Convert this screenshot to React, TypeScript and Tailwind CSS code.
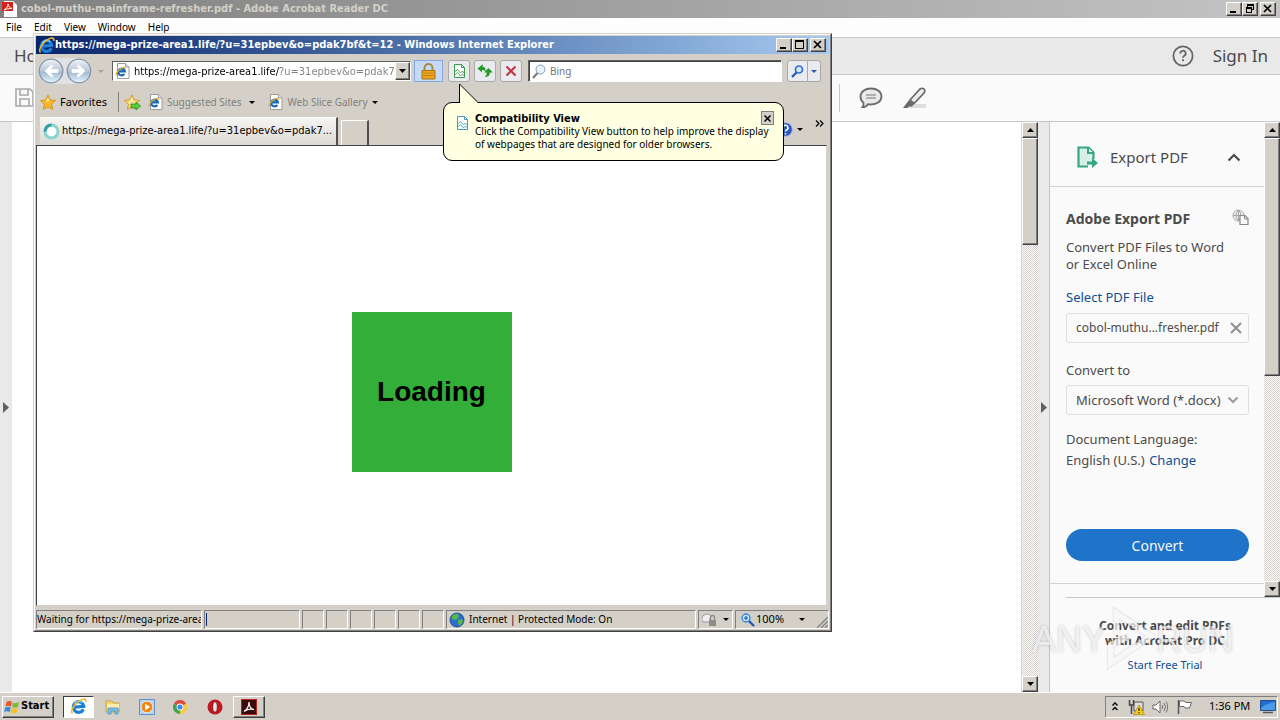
import type { ReactNode } from "react";

const tahoma = "font-['Noto_Sans','DejaVu_Sans_Condensed',sans-serif]";
const tahomaWide = "font-['DejaVu_Sans_Condensed','Noto_Sans',sans-serif]";
const tahomaBold = "font-['DejaVu_Sans_Condensed','Noto_Sans',sans-serif] font-bold";
const raised =
  "border border-t-white border-l-white border-r-[#404040] border-b-[#404040] shadow-[inset_-1px_-1px_0_#808080] bg-[#d4d0c8]";

function Arrow({ dir }: { dir: "up" | "down" | "right" }) {
  const d = { up: "M0 4h7L3.500 0z", down: "M0 0h7L3.500 4z", right: "M0 0v11L6 5.500z" }[dir];
  return (
    <svg width={dir === "right" ? 6 : 7} height={dir === "right" ? 11 : 4} aria-hidden="true" className="shrink-0">
      <path d={d} fill={dir === "right" ? "#606060" : "#000"} />
    </svg>
  );
}

function SmallArrow({ color = "#000" }: { color?: string }) {
  return (
    <svg width="6" height="3" aria-hidden="true" className="shrink-0">
      <path d="M0 0h6L3 3z" fill={color} />
    </svg>
  );
}

function Scrollbar({ thumb }: { thumb: string }) {
  return (
    <div className="flex w-4 shrink-0 flex-col bg-[repeating-conic-gradient(#ffffff_0_25%,#d4d0c8_0_50%)] bg-[length:2px_2px]">
      <button aria-label="Scroll up" className={`flex h-4 items-center justify-center ${raised}`}>
        <Arrow dir="up" />
      </button>
      <div className={`${thumb} ${raised}`} />
      <div className="flex-1" />
      <button aria-label="Scroll down" className={`flex h-4 items-center justify-center ${raised}`}>
        <Arrow dir="down" />
      </button>
    </div>
  );
}

function WindowButtons({ middle }: { middle: "max" | "restore" }) {
  const cls = `flex h-[14px] w-4 items-center justify-center ${raised}`;
  return (
    <div className="flex shrink-0">
      <button aria-label="Minimize" className={cls}>
        <svg width="10" height="10"><path d="M1 7h6v2H1z" /></svg>
      </button>
      <button aria-label={middle === "max" ? "Maximize" : "Restore"} className={cls}>
        {middle === "max" ? (
          <svg width="10" height="10"><path d="M0 0h9v9H0zM1 2v6h7V2z" fillRule="evenodd" /></svg>
        ) : (
          <svg width="10" height="10"><path d="M2 0h7v6H7v3H1V3h1zM3 2v1h4v2h1V2zM2 5v3h4V5z" fillRule="evenodd" /></svg>
        )}
      </button>
      <button aria-label="Close" className={`ml-[2px] ${cls}`}>
        <svg width="10" height="10"><path d="M1 1l7 7M8 1L1 8" stroke="#000" strokeWidth="1.700" /></svg>
      </button>
    </div>
  );
}

function IeLogo({ size = 17 }: { size?: number }) {
  return (
    <svg width={size} height={size} viewBox="0 0 16 16" aria-hidden="true" className="shrink-0">
      <path d="M12.600 10.600A5 5 0 1 1 13 7.800L4.500 8.600" fill="none" stroke="#1b7fdc" strokeWidth="3" />
      <path d="M11.500 4.500A4.700 4.700 0 0 0 4 6" fill="none" stroke="#6fd2fa" strokeWidth="1.300" />
      <path d="M2.500 14.500C-.5 13 4 5.500 9 2.500c4-2.300 6.500-2 5.800 1.200" fill="none" stroke="#f2b91e" strokeWidth="1.500" />
    </svg>
  );
}

function IePage() {
  return (
    <svg width="15" height="16" viewBox="0 0 15 16" aria-hidden="true" className="shrink-0">
      <path d="M2.500.5h8l3.500 3.500v11.500H2.500z" fill="#fff" stroke="#9a9a9a" />
      <path d="M10.500.5V4H14" fill="#e8e8e8" stroke="#9a9a9a" />
      <path d="M9.300 11a3.400 3.400 0 1 1 .6-2.600H3" fill="none" stroke="#1a66bd" strokeWidth="2.200" />
      <path d="M1.500 12.500C-.3 11 4 6 7.500 4.700c2-.7 3 0 2.600 1" fill="none" stroke="#eab41a" strokeWidth="1.200" />
    </svg>
  );
}

function Star({ add = false }: { add?: boolean }) {
  return (
    <svg width="17" height="17" viewBox="0 0 17 17" aria-hidden="true" className="shrink-0">
      <path d="M8 1l2.200 4.900 5.300.6-4 3.600 1.100 5.300L8 12.700l-4.600 2.700 1.100-5.300-4-3.600 5.300-.6z" fill={add ? "#fbe08a" : "#fbb829"} stroke="#d88c10" strokeWidth=".9" />
      <path d="M8 3.500l1.300 3.300-3.800 1z" fill="#fff3b0" />
      {add && <path d="M7 10h5V8l4.500 4-4.500 4v-2H7z" fill="#5ecb3c" stroke="#2c8a1d" strokeWidth=".8" />}
    </svg>
  );
}

function TornPage({ color }: { color: string }) {
  return (
    <svg width="13" height="16" viewBox="0 0 13 16" aria-hidden="true" className="shrink-0">
      <path d="M1.500 1.500h7l3 3v10h-10z" fill="#fff" stroke={color} />
      <path d="M8.500 1.500v3h3" fill="none" stroke={color} />
      <path d="M1.500 9l3-2.500 3 3.500L9.500 8l2 2.500M1.500 12l3-2.500 3 3.500 2-2 2 2" fill="none" stroke={color} strokeWidth=".9" />
    </svg>
  );
}

function NavCircle({ flip, label }: { flip?: boolean; label: string }) {
  return (
    <button aria-label={label}>
      <svg width="26" height="26" viewBox="0 0 26 26" className="block">
        <defs>
          <linearGradient id={flip ? "fwd" : "bck"} x1="0" y1="0" x2="0" y2="1">
            <stop offset="0" stopColor="#f0f4f8" />
            <stop offset=".5" stopColor="#b9c6d6" />
            <stop offset=".55" stopColor="#a3bad1" />
            <stop offset="1" stopColor="#e4f8ff" />
          </linearGradient>
        </defs>
        <circle cx="13" cy="13" r="11.800" fill={`url(#${flip ? "fwd" : "bck"})`} stroke="#8492a3" strokeWidth="1.300" />
        <path d={flip ? "M6 11.500h8L11 8.300 12.500 7l6.500 6-6.500 6-1.500-1.300 3-3.200H6z" : "M20 11.500h-8l3-3.200L13.500 7 7 13l6.500 6 1.500-1.300-3-3.200h8z"} fill="#fff" stroke="#fff" strokeWidth=".8" />
      </svg>
    </button>
  );
}

function ToolButton({ label, children, className = "w-[22px]" }: { label: string; children: ReactNode; className?: string }) {
  return (
    <button aria-label={label} className={`flex h-[22px] shrink-0 items-center justify-center rounded-[3px] border border-[#a9a9ac] bg-[#e9ebee] ${className}`}>
      {children}
    </button>
  );
}

function Pane({ className, children }: { className: string; children?: ReactNode }) {
  return (
    <div className={`flex h-[19px] items-center overflow-hidden border border-t-[#808080] border-l-[#808080] border-r-white border-b-white whitespace-nowrap ${className}`}>
      {children}
    </div>
  );
}

function Balloon() {
  return (
    <div role="tooltip" className="absolute top-[68px] left-[409px] w-[341px]">
      <div className="flex h-[59px] rounded-[9px] border border-black bg-[#ffffe1] pt-[9px] pr-[9px] pl-3">
        <div className="pt-[3px]"><TornPage color="#3f9dbb" /></div>
        <div className="ml-[6px] flex-1 text-[10px] leading-[13px] whitespace-nowrap text-black">
          <div className={`text-[11px] ${tahomaBold}`}>Compatibility View</div>
          <div>Click the Compatibility View button to help improve the display</div>
          <div>of webpages that are designed for older browsers.</div>
        </div>
      </div>
      <button aria-label="Close tip" className="absolute top-[9px] right-[10px] flex h-[14px] w-[13px] items-center justify-center border border-[#808080] bg-[#d4d0c8]">
        <svg width="7" height="7"><path d="M.5.500l6 6M6.500.500l-6 6" stroke="#000" strokeWidth="1.500" /></svg>
      </button>
      <svg width="22" height="20" className="absolute -top-[19px] left-4" aria-hidden="true">
        <path d="M.5 20V1L19.500 20" fill="#ffffe1" stroke="#000" />
      </svg>
    </div>
  );
}

function BrowserWindow() {
  return (
    <section aria-label="Internet Explorer" className={`absolute top-[33px] left-[33px] flex w-[799px] flex-col border border-t-[#d4d0c8] border-l-[#d4d0c8] border-r-[#404040] border-b-[#404040] bg-[#d4d0c8] text-[10px] text-black ${tahoma}`}>
      <div className="flex flex-col border border-t-white border-l-white border-r-[#808080] border-b-[#808080] p-px">
        <header className="flex h-[18px] items-center bg-linear-to-r from-[#0a246a] to-[#a6caf0] pr-[3px] pl-[2px]">
          <IeLogo />
          <h1 className={`flex-1 text-[11px] whitespace-nowrap text-white ${tahomaBold}`}>
            https://mega-prize-area1.life/?u=31epbev&amp;o=pdak7bf&amp;t=12 - Windows Internet Explorer
          </h1>
          <WindowButtons middle="max" />
        </header>

        <div className="flex h-[34px] items-center pl-[2px]">
          <div className="flex gap-[2px] rounded-full bg-[#dfe1e5]">
            <NavCircle label="Back" />
            <NavCircle label="Forward" flip />
          </div>
          <button aria-label="Recent pages" className="ml-[5px] flex w-2 justify-center"><SmallArrow color="#a8a49c" /></button>
          <div className="ml-[7px] flex h-5 w-[299px] items-center border border-t-[#606060] border-l-[#606060] border-r-white border-b-white bg-white pl-[2px]">
            <IePage />
            <input
              aria-label="Address"
              defaultValue="https://mega-prize-area1.life/?u=31epbev&o=pdak7bf&t=12"
              className={`ml-1 h-[17px] w-0 flex-1 bg-linear-to-r from-black from-[147px] to-[#808080] to-[147px] bg-clip-text text-[11px] text-transparent outline-none ${tahomaWide}`}
            />
            <button aria-label="Show address list" className={`flex h-[18px] w-[15px] items-center justify-center ${raised}`}><Arrow dir="down" /></button>
          </div>
          <button aria-label="Security report" className="ml-[3px] flex h-[22px] w-[29px] items-center justify-center border border-[#86a8e0] bg-[#c6d9fb]">
            <svg width="15" height="17" viewBox="0 0 15 17">
              <path d="M3.500 8V5a4 4 0 0 1 8 0v3" fill="none" stroke="#a98a3a" strokeWidth="2" />
              <path d="M1 7.500h13V16H1z" fill="#eba71c" stroke="#a87410" />
              <path d="M2 10h11M2 12.500h11" stroke="#c98410" />
            </svg>
          </button>
          <div className="ml-[5px] flex gap-1">
            <ToolButton label="Compatibility View"><TornPage color="#3c9a4c" /></ToolButton>
            <ToolButton label="Refresh">
              <svg width="16" height="14" viewBox="0 0 16 14" fill="#269a26">
                <path d="M6 0L.5 4.500 5 8.500V6q2.500-.5 3.500 1.500Q9 3 5.500 2.800z" />
                <path d="M11.500 4L7 8.500h2.800q0 3-2 4.500 5 0 5.200-4.500h3z" />
              </svg>
            </ToolButton>
            <ToolButton label="Stop">
              <svg width="12" height="12"><path d="M1.500 1.500l9 9M10.500 1.500l-9 9" stroke="#c8303e" strokeWidth="2" /></svg>
            </ToolButton>
          </div>
          <div className="ml-[6px] flex h-[22px] w-[254px] items-center border border-t-[#606060] border-l-[#606060] border-r-white border-b-white bg-white pl-[3px] shadow-[inset_1px_1px_0_#404040]">
            <svg width="14" height="15" viewBox="0 0 14 15" aria-hidden="true">
              <circle cx="8.500" cy="5.500" r="4.500" fill="#e6f3fb" stroke="#8a9cab" />
              <path d="M5.500 9l-4.500 5" stroke="#777" strokeWidth="2" />
            </svg>
            <input aria-label="Search" placeholder="Bing" className="ml-1 w-0 flex-1 text-[10px] outline-none placeholder:text-[#757575]" />
          </div>
          <div className="ml-[5px] flex">
            <ToolButton label="Search" className="w-[21px] rounded-r-none">
              <svg width="13" height="13"><circle cx="8" cy="4.500" r="3.500" fill="#d5e9fb" stroke="#2a6fd8" strokeWidth="1.700" /><path d="M5.500 7.500L1 12" stroke="#1d52b8" strokeWidth="2.200" /></svg>
            </ToolButton>
            <ToolButton label="Search options" className="w-[13px] rounded-l-none border-l-0"><SmallArrow color="#2a5ca8" /></ToolButton>
          </div>
        </div>

        <nav aria-label="Favorites" className="flex h-7 items-center pl-1 text-[#808080]">
          <button className="flex items-center gap-[3px] text-[11px] text-black"><Star />Favorites</button>
          <div className="ml-[11px] h-5 border-l border-[#808080]" />
          <button aria-label="Add to Favorites Bar" className="ml-[5px]"><Star add /></button>
          <a href="#suggested" className="ml-[7px] flex items-center gap-[4px]"><IePage />Suggested Sites<span className="ml-1"><SmallArrow /></span></a>
          <a href="#slices" className="ml-[13px] flex items-center gap-[4px]"><IePage />Web Slice Gallery<SmallArrow /></a>
        </nav>

        <div className="flex h-[29px] items-end pl-1">
          <button className="flex h-7 w-[298px] items-center gap-[2px] border-t border-r-2 border-t-white border-r-[#505050] bg-linear-to-b from-[#f6f5f3] to-[#dcd9d3] pl-[3px]">
            <svg width="17" height="17" aria-hidden="true">
              <circle cx="8.500" cy="8.500" r="6.500" fill="#fff" stroke="#8bd3cf" strokeWidth="3" />
              <path d="M2 8.500a6.500 6.500 0 0 1 6.500-6.500" fill="none" stroke="#2f9fa0" strokeWidth="3" />
            </svg>
            <span className={`text-[11px] ${tahomaWide}`}>https://mega-prize-area1.life/?u=31epbev&amp;o=pdak7...</span>
          </button>
          <button aria-label="New tab" className="ml-[3px] h-[25px] w-7 border-t border-r-2 border-l border-t-white border-l-white border-r-[#505050]" />
          <div className="flex-1" />
          <div className="flex h-full items-start pt-1 pr-[5px]">
            <button aria-label="Help" className="flex items-center gap-1 pt-[2px]">
              <svg width="15" height="15"><circle cx="7.500" cy="7.500" r="6.800" fill="#2c58c0" stroke="#9cb4e4" /><path d="M5 6a2.500 2.500 0 1 1 3.500 2q-1 .5-1 1.500M7.500 11v1.500" fill="none" stroke="#fff" strokeWidth="1.500" /></svg>
              <SmallArrow />
            </button>
            <button aria-label="More commands" className="ml-3">
              <svg width="9" height="7"><path d="M1 .5l3 3-3 3M5 .5l3 3-3 3" fill="none" stroke="#000" strokeWidth="1.200" /></svg>
            </button>
          </div>
        </div>

        <main className="mr-[2px] flex h-[461px] items-center justify-center border border-t-[#404040] border-l-[#404040] border-r-[#d4d0c8] border-b-[#d4d0c8] bg-white pt-[33px]">
          <div className="flex size-40 items-center justify-center bg-[#33ae38] font-['Liberation_Sans',Arial,sans-serif] text-[28px] font-bold">Loading</div>
        </main>

        <footer className="flex items-center gap-[2px] pt-1">
          <Pane className="w-[166px]">Waiting for https://mega-prize-area1.life</Pane>
          <Pane className="w-24"><span className="ml-px h-[13px] w-px bg-[#0a246a]" /></Pane>
          {[0, 1, 2, 3, 4, 5].map((n) => <Pane key={n} className="w-[22px]" />)}
          <Pane className="w-[250px] gap-1 pl-[2px]">
            <svg width="16" height="16" aria-hidden="true" className="shrink-0">
              <circle cx="8" cy="8" r="7" fill="#2a6fd0" stroke="#20509c" />
              <path d="M3 4q3-3 6-2l1 3-3 3-4-1zM9 8l4-1 1 3-3 4-2-2z" fill="#57b947" />
            </svg>
            <span>Internet | Protected Mode: On</span>
          </Pane>
          <Pane className="w-[35px] justify-between px-[3px]">
            <svg width="16" height="15" aria-hidden="true">
              <path d="M1 10a5 5 0 0 1 8-6l-2 6z" fill="#eee" stroke="#999" />
              <path d="M7 8h7v6H7z" fill="#8c8c8c" /><path d="M8.500 8V5.500a2 2 0 0 1 4 0V8" fill="none" stroke="#8c8c8c" strokeWidth="1.300" />
            </svg>
            <SmallArrow />
          </Pane>
          <Pane className="flex-1 pl-[5px]">
            <svg width="14" height="14" aria-hidden="true" className="shrink-0">
              <circle cx="5" cy="5" r="4" fill="#bfe3fb" stroke="#3f89d4" strokeWidth="1.400" /><path d="M5 3v4M3 5h4" stroke="#1a5ab8" strokeWidth="1.200" /><path d="M8 8l5 5" stroke="#1d52b8" strokeWidth="2.200" />
            </svg>
            <span className="ml-px text-[11px]">100%</span>
            <span className="ml-[15px]"><SmallArrow /></span>
            <svg width="12" height="12" className="ml-auto shrink-0 self-end" aria-hidden="true"><path d="M1 12L12 1M5 12l7-7M9 12l3-3" stroke="#808080" strokeWidth="1.300" /></svg>
          </Pane>
        </footer>
      </div>
      <Balloon />
    </section>
  );
}

function ExportPanel() {
  return (
    <aside className="flex w-[231px] shrink-0 flex-col border-l border-[#c4c4c4] bg-[#fafafa] font-['Noto_Sans','Open_Sans',sans-serif] text-[13px] text-[#4b4b4b]">
      <div className="flex h-[475px]">
        <div className="min-w-0 flex-1">
          <button className="flex h-[65px] w-full items-center border-b border-[#d4d4d4] pt-[6px] pr-5 pl-[27px] text-[15px]">
            <svg width="21" height="22" viewBox="0 0 21 22" aria-hidden="true">
              <path d="M11 20.500H1.500v-19h10l5 5V13" fill="#d8efe6" stroke="#35a583" strokeWidth="2.200" />
              <path d="M11 1.500V7h5.500" fill="#fafafa" stroke="#35a583" strokeWidth="2" />
              <path d="M10 15.500h5V12l6 5-6 5v-3.500h-5z" fill="#35a583" />
            </svg>
            <span className="ml-3 flex-1 text-left">Export PDF</span>
            <svg width="14" height="9" aria-hidden="true" className="mr-[3px]"><path d="M1.500 7.500L7 2l5.500 5.500" fill="none" stroke="#4b4b4b" strokeWidth="2.200" /></svg>
          </button>
          <div className="pt-[22px] pr-[15px] pl-4">
            <div className="flex justify-between">
              <h2 className="text-[14px] leading-5 font-bold">Adobe Export PDF</h2>
              <svg width="17" height="17" aria-hidden="true" className="shrink-0">
                <circle cx="6.500" cy="6.500" r="5.500" fill="#ececec" stroke="#a8a8a8" />
                <path d="M1 6.500h11M6.500 1v11M6.500 1q-5 5.500 0 11M6.500 1q5 5.500 0 11" fill="none" stroke="#a8a8a8" />
                <path d="M8 6.500h5l3 3v6H8z" fill="#fafafa" stroke="#888" strokeWidth="1.200" /><path d="M12.500 6.500V10H16" fill="none" stroke="#888" />
              </svg>
            </div>
            <p className="mt-[10px] leading-[17px]">Convert PDF Files to Word<br />or Excel Online</p>
            <a href="#select" className="mt-[15px] block leading-[18px] text-[#0d4f96]">Select PDF File</a>
            <div className="mt-[7px] flex h-[30px] items-center justify-between rounded-[3px] border border-[#dedede] pr-[6px] pl-[9px] whitespace-nowrap">
              <span className="text-[12px]">cobol-muthu...fresher.pdf</span>
              <button aria-label="Remove file" className="shrink-0"><svg width="12" height="12" className="block"><path d="M1 1l10 10M11 1L1 11" stroke="#8f8f8f" strokeWidth="2" /></svg></button>
            </div>
            <label htmlFor="format" className="mt-[18px] block leading-[18px]">Convert to</label>
            <div className="relative mt-[6px]">
              <select id="format" className="h-[30px] w-full appearance-none rounded-[3px] border border-[#dedede] bg-transparent pt-[2px] pl-[9px] text-[13px]">
                <option>Microsoft Word (*.docx)</option>
              </select>
              <svg width="12" height="8" className="pointer-events-none absolute top-[11px] right-[10px]" aria-hidden="true"><path d="M1.500 1.500L6 6l4.500-4.500" fill="none" stroke="#999" strokeWidth="2" /></svg>
            </div>
            <p className="mt-[14px] leading-[21px]">Document Language:<br />English (U.S.) <a href="#language" className="ml-px text-[#0d4f96]">Change</a></p>
            <button className="mt-[58px] h-8 w-full rounded-full bg-[#1f73c9] text-[14px] text-[#f4f8fc]">Convert</button>
          </div>
          <div className="mt-[22px] border-t border-[#d4d4d4]" />
        </div>
        <Scrollbar thumb="h-[238px]" />
      </div>
      <div className="ml-4 border-t border-[#c8c8c8] pt-5 pr-4 text-center">
        <p className="text-[12px] leading-[15px] font-bold">Convert and edit PDFs<br />with Acrobat Pro DC</p>
        <a href="#trial" className="mt-[9px] inline-block text-[11px] leading-4 text-[#0d4f96]">Start Free Trial</a>
      </div>
    </aside>
  );
}

function Watermark() {
  const letters = "text-white/70 [text-shadow:0_0_3px_#00000038]";
  return (
    <div className="pointer-events-none absolute right-[46px] bottom-[46px] flex h-[68px] items-center font-['Liberation_Sans',sans-serif] text-[36px] leading-none">
      <span className={letters}>ANY</span>
      <svg width="52" height="66" viewBox="0 0 54 66" aria-hidden="true" className="-ml-[2px]">
        <path d="M13 26V5l36 24-42 28V38l20-9" fill="none" stroke="#00000014" strokeWidth="8" />
        <path d="M13 26V5l36 24-42 28V38l20-9" fill="none" stroke="#ffffffb0" strokeWidth="6" />
      </svg>
      <span className={letters}>RUN</span>
    </div>
  );
}

function Taskbar() {
  return (
    <footer className={`relative flex h-7 shrink-0 items-center border-t border-white bg-[#d4d0c8] pr-[2px] pl-[2px] text-[11px] text-black ${tahoma}`}>
      <button className={`flex h-[22px] w-[52px] items-center gap-px pl-px text-[11px] ${tahomaBold} ${raised}`}>
        <svg width="16" height="16" viewBox="0 0 16 16" aria-hidden="true" className="shrink-0">
          <path d="M2.500 3q3-2 5.500 0L7 7.500q-3-1.500-5.500 0z" fill="#e8552d" />
          <path d="M9 3.500q3 1.500 6-.5L14 8q-3 1.500-6 0z" fill="#7cb83c" />
          <path d="M1.200 8.500q3-1.500 5.500 0L5.700 13q-2.700-1.500-5.500 0z" fill="#3a8ad8" />
          <path d="M7.700 9q3 1.500 6 0l-1 4.500q-3 2-6 0z" fill="#f8c028" />
        </svg>
        Start
      </button>
      <button aria-label="Internet Explorer" className="ml-[9px] flex h-[22px] w-[31px] items-center justify-center border border-t-[#404040] border-l-[#404040] border-r-white border-b-white bg-white"><IeLogo /></button>
      <button aria-label="Explorer" className="ml-[11px]">
        <svg width="16" height="16" className="block"><path d="M1 2h6l1 2h6v9H1z" fill="#f3d878" stroke="#c9a63c" /><path d="M2 5h12v5H2z" fill="#fbeeb0" /><path d="M3 15V9h10v6h-3v-3H6v3z" fill="#77bfe8" stroke="#4b94c4" strokeWidth=".8" /></svg>
      </button>
      <button aria-label="Media Player" className="ml-[18px]">
        <svg width="16" height="16" className="block"><path d="M.5.5h15v15H.5z" fill="#b7d4f0" stroke="#5b92cc" /><circle cx="8" cy="8" r="5.800" fill="#f28718" stroke="#fff" strokeWidth=".6" /><path d="M6.200 4.800v6.400L11.200 8z" fill="#fff" /></svg>
      </button>
      <button aria-label="Chrome" className="ml-[18px]">
        <svg width="14" height="14" viewBox="0 0 14 14" className="block"><path d="M7 7V0l6.100 3.500A7 7 0 0 1 7 14z" fill="#f8cc3a" /><path d="M7 7v7A7 7 0 0 1 .9 3.500z" fill="#3da554" /><path d="M.9 3.500A7 7 0 0 1 13.100 3.500L7 7z" fill="#dd4b3c" /><circle cx="7" cy="7" r="3.400" fill="#fff" /><circle cx="7" cy="7" r="2.600" fill="#4688ee" /></svg>
      </button>
      <button aria-label="Opera" className="ml-5">
        <svg width="16" height="16" className="block"><circle cx="8" cy="8" r="7.500" fill="#c01820" /><ellipse cx="8" cy="8" rx="2.300" ry="5.200" fill="#e8e4e0" stroke="#7d0b10" strokeWidth=".8" /></svg>
      </button>
      <button aria-label="Acrobat Reader" className={`ml-[10px] flex h-[22px] w-8 items-center justify-center ${raised}`}>
        <svg width="16" height="16"><path d="M0 0h16v16H0z" fill="#3b0a0a" /><path d="M.5.5h15v15H.5z" fill="none" stroke="#b3261e" /><path d="M3 12.500c3-2 5-6 5-9.500 0 4 2 7 5 7.500-3-.8-7-.2-10 2z" fill="none" stroke="#fff" strokeWidth="1.200" /></svg>
      </button>
      <div className="flex-1" />
      <div className="flex h-[22px] w-[173px] items-center border border-t-[#808080] border-l-[#808080] border-r-white border-b-white pl-[6px]">
        <button aria-label="Show hidden icons"><svg width="6" height="9" className="block"><path d="M.5 3.500L3 1l2.500 2.500M.5 8L3 5.500 5.500 8" fill="none" stroke="#000" strokeWidth="1.300" /></svg></button>
        <svg width="17" height="16" className="ml-[10px]" aria-hidden="true"><path d="M6 3h9v9H6z" fill="#ddd" stroke="#555" /><path d="M1.500 1v5h4V1M3.500 6v9" fill="none" stroke="#444" strokeWidth="1.500" /><path d="M11 6l5.500 9.500h-11z" fill="#f6cc18" stroke="#a88410" strokeWidth=".7" /><path d="M11 9v3M11 13v1.200" stroke="#222" strokeWidth="1.200" /></svg>
        <svg width="16" height="14" className="ml-[7px]" aria-hidden="true"><path d="M1 5h3l4-4v12L4 9H1z" fill="#fff" stroke="#666" /><path d="M10 5q1.500 2 0 4M12 3q3 4 0 8M14 1.500q3.500 5.500 0 11" fill="none" stroke="#777" /></svg>
        <svg width="16" height="15" className="ml-[9px]" aria-hidden="true"><path d="M1.500 1v14" stroke="#555" strokeWidth="1.500" /><path d="M2.500 2h5l1 1.500h6l-2 5.500H8l-1-1.500H2.500z" fill="#fff" stroke="#666" /></svg>
        <span className="ml-4 whitespace-nowrap">1:36 PM</span>
        <svg width="16" height="14" className="mr-px ml-auto" aria-hidden="true"><path d="M.5.5h15v10H.5z" fill="#1d6fd0" stroke="#234e8a" /><path d="M1 8q6-5 14-6v8H1z" fill="#4c9be8" /><path d="M3 12.500h10" stroke="#555" strokeWidth="1.500" /></svg>
      </div>
    </footer>
  );
}

export default function App() {
  return (
    <div className="relative flex h-screen min-h-[720px] flex-col overflow-hidden bg-white">
      <header className="flex h-[18px] shrink-0 items-center bg-linear-to-r from-[#808080] to-[#c4c4c4] pr-1 pl-[2px]">
        <svg width="16" height="16" aria-hidden="true" className="shrink-0"><path d="M2 0h9l4 4v12H2z" fill="#fff" /><path d="M0 1h11v9H0z" fill="#d4221c" /><path d="M2 9c3-1.500 4-4 4-6 0 2 2 4 4 4.500-3 0-6 .5-8 1.500z" fill="none" stroke="#fff" /></svg>
        <h1 className={`ml-[3px] flex-1 text-[11px] whitespace-nowrap text-[#d4d0c8] ${tahomaBold}`}>cobol-muthu-mainframe-refresher.pdf - Adobe Acrobat Reader DC</h1>
        <WindowButtons middle="restore" />
      </header>
      <nav aria-label="Menu" className={`flex h-5 shrink-0 items-center gap-3 border-b border-[#c8c8c8] bg-[#fdfdfd] pl-[6px] text-[10px] text-black ${tahoma}`}>
        {["File", "Edit", "View", "Window", "Help"].map((m) => <button key={m}>{m}</button>)}
      </nav>
      <div className="flex h-[37px] shrink-0 items-center border-b border-[#c8c8c8] bg-[#e9e9e9] pr-3 pl-[14px] font-['Noto_Sans',sans-serif] text-[17px] text-[#4b4b4b]">
        <button className="w-[19px] overflow-hidden text-left">Home</button>
        <div className="flex-1" />
        <button aria-label="Help" className="mr-[19px]">
          <svg width="22" height="22" className="block"><circle cx="11" cy="11" r="9.600" fill="none" stroke="#666" strokeWidth="1.800" /><path d="M8.300 8.500a2.700 2.700 0 1 1 4 2.300q-1.300.8-1.300 2M11 14.300v2" fill="none" stroke="#666" strokeWidth="1.800" /></svg>
        </button>
        <a href="#signin">Sign In</a>
      </div>
      <div className="flex h-[47px] shrink-0 items-center border-b border-[#c8c8c8] bg-[#fafafa] pl-[15px]">
        <button aria-label="Save"><svg width="19" height="20" className="block"><path d="M1 1h14l3 3v14H1zM5 1v6h8V1M5 18v-7h9v7" fill="none" stroke="#a8a8a8" strokeWidth="1.600" /></svg></button>
        <div className="ml-[805px] h-7 border-l border-[#c8c8c8]" />
        <button aria-label="Comment" className="ml-[19px]">
          <svg width="24" height="22" className="block"><path d="M12 1.500c6 0 10.500 3.300 10.500 8s-4.500 8-10.500 8q-1.500 0-3-.3-2 3-5.500 3 1.500-2 1-4.500Q1.500 13.500 1.500 9.500c0-4.700 4.500-8 10.500-8z" fill="#e9e9e9" stroke="#6a6a6a" strokeWidth="1.800" /><path d="M7 8h10M7 11h10" stroke="#777" strokeWidth="1.200" /></svg>
        </button>
        <button aria-label="Highlight" className="ml-5">
          <svg width="23" height="22" className="block"><path d="M8 17h15v4H5z" fill="#dedede" /><path d="M7 13L17 2q2-1.500 4 0 1.500 1.500 0 4L11 16.500z" fill="#ececec" stroke="#6a6a6a" strokeWidth="1.700" /><path d="M6 13l5 4-2 2.500H6L4.500 21 0 21z" fill="#6a6a6a" /></svg>
        </button>
      </div>
      <div className="flex min-h-0 flex-1">
        <button aria-label="Show left panel" className="flex w-3 items-center bg-[#e9e9e9] pl-[3px]"><Arrow dir="right" /></button>
        <div className="flex-1 border-r border-[#d4d4d4] bg-white" />
        <Scrollbar thumb="h-[107px]" />
        <button aria-label="Toggle tools panel" className="flex w-[11px] items-center bg-[#e9e9e9] pl-[3px]"><Arrow dir="right" /></button>
        <ExportPanel />
      </div>
      <Taskbar />
      <BrowserWindow />
      <Watermark />
    </div>
  );
}
